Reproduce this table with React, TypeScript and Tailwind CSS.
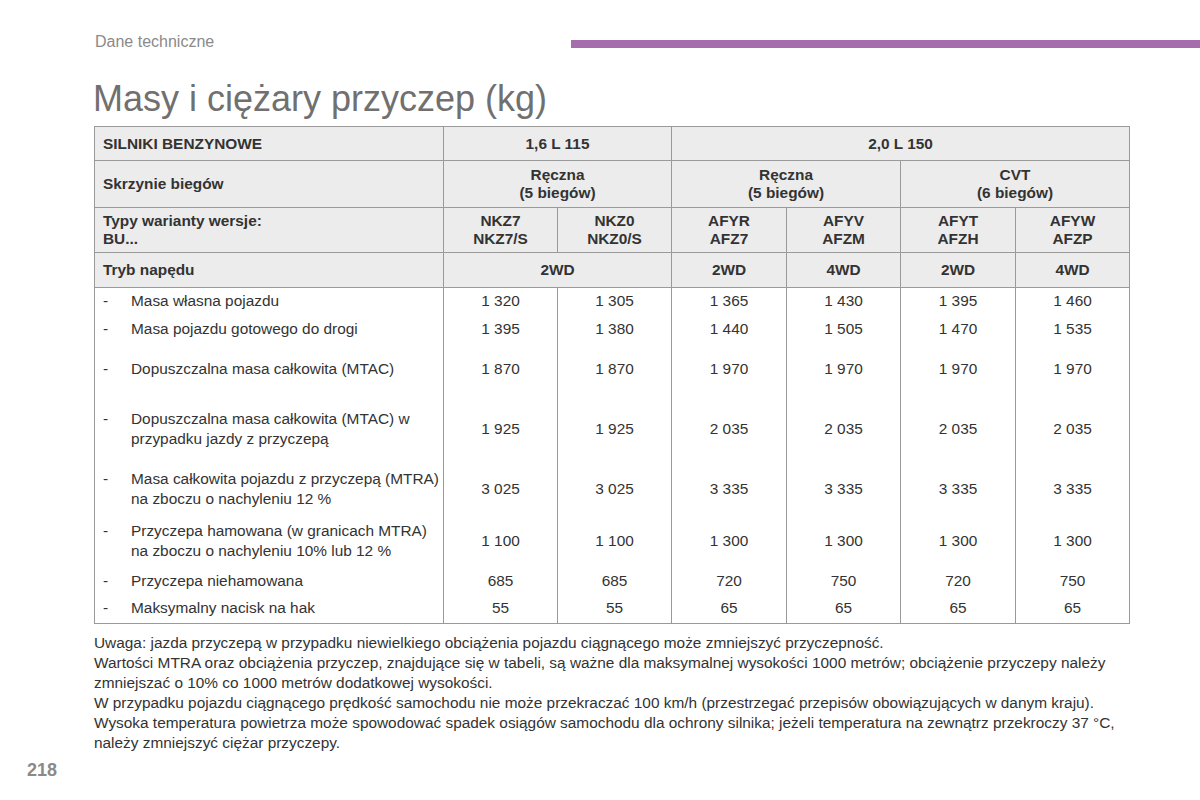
const headerCell = "border border-[#9a9a9a] bg-[#ececec] font-bold text-center";
const dataCell = "border-x border-[#9a9a9a] text-center align-middle";

const rows: { label: string[]; values: string[]; h: string }[] = [
  { label: ["Masa własna pojazdu"], values: ["1 320", "1 305", "1 365", "1 430", "1 395", "1 460"], h: "h-[26px]" },
  { label: ["Masa pojazdu gotowego do drogi"], values: ["1 395", "1 380", "1 440", "1 505", "1 470", "1 535"], h: "h-[30px]" },
  { label: ["Dopuszczalna masa całkowita (MTAC)"], values: ["1 870", "1 870", "1 970", "1 970", "1 970", "1 970"], h: "h-[50px]" },
  {
    label: ["Dopuszczalna masa całkowita (MTAC) w", "przypadku jazdy z przyczepą"],
    values: ["1 925", "1 925", "2 035", "2 035", "2 035", "2 035"],
    h: "h-[70px]",
  },
  {
    label: ["Masa całkowita pojazdu z przyczepą (MTRA)", "na zboczu o nachyleniu 12 %"],
    values: ["3 025", "3 025", "3 335", "3 335", "3 335", "3 335"],
    h: "h-[50px]",
  },
  {
    label: ["Przyczepa hamowana (w granicach MTRA)", "na zboczu o nachyleniu 10% lub 12 %"],
    values: ["1 100", "1 100", "1 300", "1 300", "1 300", "1 300"],
    h: "h-[54px]",
  },
  { label: ["Przyczepa niehamowana"], values: ["685", "685", "720", "750", "720", "750"], h: "h-[26px]" },
  { label: ["Maksymalny nacisk na hak"], values: ["55", "55", "65", "65", "65", "65"], h: "h-[30px]" },
];

const notes = [
  "Uwaga: jazda przyczepą w przypadku niewielkiego obciążenia pojazdu ciągnącego może zmniejszyć przyczepność.",
  "Wartości MTRA oraz obciążenia przyczep, znajdujące się w tabeli, są ważne dla maksymalnej wysokości 1000 metrów; obciążenie przyczepy należy zmniejszać o 10% co 1000 metrów dodatkowej wysokości.",
  "W przypadku pojazdu ciągnącego prędkość samochodu nie może przekraczać 100 km/h (przestrzegać przepisów obowiązujących w danym kraju).",
  "Wysoka temperatura powietrza może spowodować spadek osiągów samochodu dla ochrony silnika; jeżeli temperatura na zewnątrz przekroczy 37 °C, należy zmniejszyć ciężar przyczepy.",
];

export default function App() {
  return (
    <div className="w-[1200px] h-[800px] bg-white overflow-hidden font-['Liberation_Sans',Arial,sans-serif] text-[#333]">
      {/* Top strip */}
      <div className="flex items-center pt-[33px]">
        <div className="pl-[95px] text-[16px] leading-[18px] text-[#8a8a8a] w-[571px]">Dane techniczne</div>
        <div className="flex-1 h-[8px] mt-[4px] bg-[#a56dab]" />
      </div>

      <h1 className="pl-[93px] mt-[27px] text-[36px] leading-[42px] text-[#707070] font-normal">
        Masy i ciężary przyczep (kg)
      </h1>

      <div className="pl-[94px] mt-[6px]">
        <table className="w-[1036px] border-collapse border border-[#9a9a9a] text-[15.4px] table-fixed">
          <colgroup>
            <col className="w-[349px]" />
            <col className="w-[114px]" />
            <col className="w-[114px]" />
            <col className="w-[115px]" />
            <col className="w-[114px]" />
            <col className="w-[115px]" />
            <col className="w-[114px]" />
          </colgroup>
          <thead className="leading-[18px]">
            <tr className="h-[34px]">
              <td className={`${headerCell} text-left pl-[8px]`}>SILNIKI BENZYNOWE</td>
              <td className={headerCell} colSpan={2}>1,6 L 115</td>
              <td className={headerCell} colSpan={4}>2,0 L 150</td>
            </tr>
            <tr className="h-[47px]">
              <td className={`${headerCell} text-left pl-[8px]`}>Skrzynie biegów</td>
              <td className={headerCell} colSpan={2}>Ręczna<br />(5 biegów)</td>
              <td className={headerCell} colSpan={2}>Ręczna<br />(5 biegów)</td>
              <td className={headerCell} colSpan={2}>CVT<br />(6 biegów)</td>
            </tr>
            <tr className="h-[45px]">
              <td className={`${headerCell} text-left pl-[8px]`}>Typy warianty wersje:<br />BU...</td>
              <td className={headerCell}>NKZ7<br />NKZ7/S</td>
              <td className={headerCell}>NKZ0<br />NKZ0/S</td>
              <td className={headerCell}>AFYR<br />AFZ7</td>
              <td className={headerCell}>AFYV<br />AFZM</td>
              <td className={headerCell}>AFYT<br />AFZH</td>
              <td className={headerCell}>AFYW<br />AFZP</td>
            </tr>
            <tr className="h-[35px]">
              <td className={`${headerCell} text-left pl-[8px]`}>Tryb napędu</td>
              <td className={headerCell} colSpan={2}>2WD</td>
              <td className={headerCell}>2WD</td>
              <td className={headerCell}>4WD</td>
              <td className={headerCell}>2WD</td>
              <td className={headerCell}>4WD</td>
            </tr>
          </thead>
          <tbody className="leading-[20px]">
            {rows.map((r, i) => (
              <tr key={i} className={r.h}>
                <td className="border-x border-[#9a9a9a] align-middle pl-[8px]">
                  <div className="flex">
                    <span className="w-[28px] shrink-0">-</span>
                    <span>
                      {r.label.map((l, j) => (
                        <div key={j}>{l}</div>
                      ))}
                    </span>
                  </div>
                </td>
                {r.values.map((v, j) => (
                  <td key={j} className={dataCell}>{v}</td>
                ))}
              </tr>
            ))}
          </tbody>
        </table>
      </div>

      {/* Notes */}
      <div className="pl-[94px] pr-[72px] mt-[9px] text-[15.4px] leading-[20px] text-[#333]">
        {notes.map((n, i) => (
          <p key={i}>{n}</p>
        ))}
      </div>

      <div className="pl-[27px] mt-[6px] text-[18px] leading-[22px] font-bold text-[#8a8a8a]">218</div>
    </div>
  );
}
